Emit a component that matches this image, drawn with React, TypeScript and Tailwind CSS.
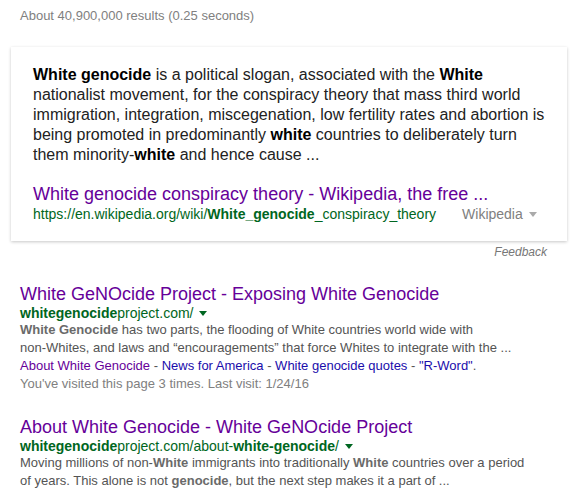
import React from 'react';

const Caret = ({ color }: { color: string }) => (
  <span
    className="inline-block align-middle ml-[6px] w-0 h-0 border-l-[4px] border-r-[4px] border-t-[5px] border-l-transparent border-r-transparent"
    style={{ borderTopColor: color }}
  />
);

export default function App() {
  return (
    <div className="w-[578px] h-[503px] overflow-hidden bg-white font-['Liberation_Sans',Arial,sans-serif]">
      <div className="pl-[20px] pt-[8px] text-[13px] leading-[16px] text-[#808080]">
        About 40,900,000 results (0.25 seconds)
      </div>

      <div className="mx-[11px] mt-[23px] bg-white shadow-[0_1px_3px_rgba(0,0,0,0.22)] pl-[22px] pr-[16px] pt-[18px] pb-[18px]">
        <p className="text-[16px] leading-[20px] text-[#222]">
          <b className="text-black">White genocide</b> is a political slogan, associated with the{' '}
          <b className="text-black">White</b> nationalist movement, for the conspiracy theory that mass third world
          immigration, integration, miscegenation, low fertility rates and abortion is being promoted in predominantly{' '}
          <b className="text-black">white</b> countries to deliberately turn them minority-<b className="text-black">white</b>{' '}
          and hence cause ...
        </p>
        <div className="mt-[18px] text-[18px] leading-[22px] text-[#660099]">
          White genocide conspiracy theory - Wikipedia, the free ...
        </div>
        <div className="flex items-center text-[14px] leading-[18px]">
          <span className="text-[#006621]">
            https://en.wikipedia.org/wiki/<b>White_genocide</b>_conspiracy_theory
          </span>
          <span className="ml-[26px] text-[#808080] flex items-center">
            Wikipedia
            <Caret color="#aaa" />
          </span>
        </div>
      </div>

      <div className="pr-[31px] pt-[3px] text-right text-[12px] leading-[16px] italic text-[#777]">Feedback</div>

      <div className="pl-[20px] pt-[23px]">
        <div className="text-[18px] leading-[22px] text-[#660099]">White GeNOcide Project - Exposing White Genocide</div>
        <div className="text-[14px] leading-[16px] text-[#006621] flex items-center">
          <span>
            <b>whitegenocide</b>project.com/
          </span>
          <Caret color="#006621" />
        </div>
        <div className="text-[13px] leading-[18px] text-[#545454]">
          <b className="text-[#6a6a6a]">White Genocide</b> has two parts, the flooding of White countries world wide with
          <br />
          non-Whites, and laws and “encouragements” that force Whites to integrate with the ...
        </div>
        <div className="text-[13px] leading-[18px] text-[#545454]">
          <span className="text-[#660099]">About White Genocide</span> -{' '}
          <span className="text-[#1a0dab]">News for America</span> -{' '}
          <span className="text-[#1a0dab]">White genocide quotes</span> -{' '}
          <span className="text-[#1a0dab]">"R-Word"</span>.
        </div>
        <div className="text-[13px] leading-[18px] text-[#808080]">
          You've visited this page 3 times. Last visit: 1/24/16
        </div>

        <div className="mt-[23px] text-[18px] leading-[22px] text-[#660099]">
          About White Genocide - White GeNOcide Project
        </div>
        <div className="text-[14px] leading-[16px] text-[#006621] flex items-center">
          <span>
            <b>whitegenocide</b>project.com/about-<b>white-genocide</b>/
          </span>
          <Caret color="#006621" />
        </div>
        <div className="text-[13px] leading-[18px] text-[#545454]">
          Moving millions of non-<b className="text-[#6a6a6a]">White</b> immigrants into traditionally{' '}
          <b className="text-[#6a6a6a]">White</b> countries over a period
          <br />
          of years. This alone is not <b className="text-[#6a6a6a]">genocide</b>, but the next step makes it a part of ...
        </div>
      </div>
    </div>
  );
}
